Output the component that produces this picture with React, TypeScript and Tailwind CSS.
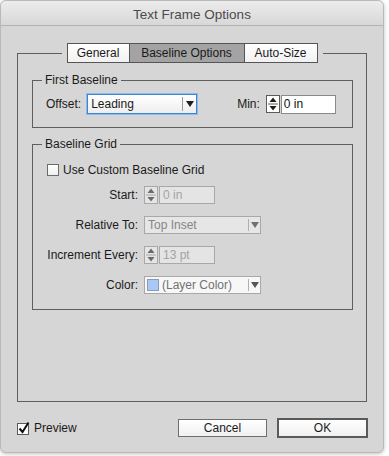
import React from 'react';

function Spinner({ disabled }: { disabled?: boolean }) {
  const stroke = disabled ? '#a8a8a8' : '#5a5a5a';
  const fill = disabled ? '#e4e4e4' : '#ffffff';
  const arrow = disabled ? '#6a6a6a' : '#1e1e1e';
  return (
    <svg width="14" height="18" viewBox="0 0 14 18" className="shrink-0 block">
      <rect x="0.5" y="0.5" width="13" height="17" fill={fill} stroke={stroke} />
      <line x1="2" y1="9" x2="12" y2="9" stroke={stroke} />
      <path d="M7 2.5 L10.5 7 L3.5 7 Z" fill={arrow} />
      <path d="M7 15.5 L10.5 11 L3.5 11 Z" fill={arrow} />
    </svg>
  );
}

function Arrow({ color = '#1e1e1e' }: { color?: string }) {
  return (
    <svg width="8" height="6" viewBox="0 0 8 6" className="block">
      <path d="M0 0 L8 0 L4 6 Z" fill={color} />
    </svg>
  );
}

function Field({ value, disabled }: { value: string; disabled?: boolean }) {
  return (
    <div
      className={
        disabled
          ? 'h-[18px] w-[56px] border border-[#a8a8a8] bg-[#e4e4e4] pl-[3px] text-[12px] leading-[16px] text-[#a3a3a3]'
          : 'h-[19px] w-[55px] border border-[#8a8a8a] bg-white pl-[2px] text-[12px] leading-[17px] text-[#111]'
      }
    >
      {value}
    </div>
  );
}

function Label({ children }: { children: React.ReactNode }) {
  return <div className="w-[91px] shrink-0 text-right text-[12px] leading-[14px] text-[#1a1a1a]">{children}</div>;
}

export default function App() {
  return (
    <div className="w-[389px] h-[456px] bg-white font-['Liberation_Sans',Arial,sans-serif] text-[#1a1a1a]">
      <div className="w-[384px] rounded-[6px] border border-[#b9b9b9] bg-[#d6d6d6] shadow-[0_1px_4px_rgba(0,0,0,0.25)] overflow-hidden">
        {/* title bar */}
        <div className="h-[25px] border-b border-[#b3b3b3] bg-gradient-to-b from-[#ececec] to-[#d8d8d8] pt-[6px] text-center text-[13.5px] leading-[16px] text-[#4b4b4b]">
          Text Frame Options
        </div>

        <fieldset className="mt-[17px] ml-[16px] w-[350px] border border-[#5f5f5f] pb-[91px]">
          <legend className="mx-auto px-[5px]">
            <div className="flex h-[20px] border border-[#555] text-[12px] leading-[18px]">
              <div className="w-[61px] bg-gradient-to-b from-white to-[#f1f1f1] text-center">General</div>
              <div className="w-[115px] border-l border-[#555] bg-[#a3a3a3] text-center">Baseline Options</div>
              <div className="w-[73px] border-l border-[#555] bg-gradient-to-b from-white to-[#f1f1f1] text-center">Auto-Size</div>
            </div>
          </legend>

          {/* First Baseline */}
          <fieldset className="mt-[10px] ml-[14px] w-[321px] border border-[#5f5f5f] pb-[13px]">
            <legend className="ml-[9px] px-[3px] text-[12px] leading-[14px]">First Baseline</legend>
            <div className="mt-[7px] flex items-center pl-[13px] text-[12px]">
              <span className="leading-[14px]">Offset:</span>
              <div className="ml-[6px] flex h-[20px] w-[110px] items-center border border-[#3c84d4] bg-gradient-to-b from-white to-[#eeeeee] shadow-[0_0_0_1px_#8ebbec]">
                <span className="flex-1 pl-[3px] leading-[14px]">Leading</span>
                <div className="h-[14px] border-l border-[#9a9a9a]" />
                <div className="flex w-[13px] justify-center">
                  <Arrow />
                </div>
              </div>
              <span className="ml-[40px] leading-[14px]">Min:</span>
              <div className="ml-[6px]">
                <Spinner />
              </div>
              <div className="ml-px">
                <Field value="0 in" />
              </div>
            </div>
          </fieldset>

          {/* Baseline Grid */}
          <fieldset className="mt-[9px] ml-[14px] w-[321px] border border-[#5f5f5f] pb-[15px]">
            <legend className="ml-[9px] px-[3px] text-[12px] leading-[14px]">Baseline Grid</legend>
            <div className="mt-[12px] flex items-center pl-[14px] text-[12px] leading-[14px]">
              <div className="h-[12px] w-[12px] border border-[#6b6b6b] bg-gradient-to-b from-white to-[#efefef]" />
              <span className="ml-[4px]">Use Custom Baseline Grid</span>
            </div>
            <div className="mt-[9px] flex flex-col gap-[12px] pl-[14px]">
              <div className="flex h-[18px] items-center">
                <Label>Start:</Label>
                <div className="ml-[6px]">
                  <Spinner disabled />
                </div>
                <div className="ml-px">
                  <Field value="0 in" disabled />
                </div>
              </div>
              <div className="flex h-[18px] items-center">
                <Label>Relative To:</Label>
                <div className="ml-[6px] flex h-[18px] w-[117px] items-center border border-[#a8a8a8] bg-[#e6e6e6] text-[12px]">
                  <span className="flex-1 pl-[3px] leading-[14px] text-[#858585]">Top Inset</span>
                  <div className="h-[12px] border-l border-[#b0b0b0]" />
                  <div className="flex w-[11px] justify-center">
                    <Arrow color="#707070" />
                  </div>
                </div>
              </div>
              <div className="flex h-[18px] items-center">
                <Label>Increment Every:</Label>
                <div className="ml-[6px]">
                  <Spinner disabled />
                </div>
                <div className="ml-px">
                  <Field value="13 pt" disabled />
                </div>
              </div>
              <div className="flex h-[18px] items-center">
                <Label>Color:</Label>
                <div className="ml-[6px] flex h-[18px] w-[117px] items-center border border-[#a8a8a8] bg-[#f7f7f7] text-[12px]">
                  <div className="ml-[2px] h-[12px] w-[12px] border border-[#8a9bb5] bg-[#a8c9f7]" />
                  <span className="flex-1 pl-[3px] leading-[14px] text-[#727272]">(Layer Color)</span>
                  <div className="h-[12px] border-l border-[#b0b0b0]" />
                  <div className="flex w-[11px] justify-center">
                    <Arrow color="#555" />
                  </div>
                </div>
              </div>
            </div>
          </fieldset>
        </fieldset>

        {/* footer */}
        <div className="mt-[16px] mb-[14px] flex items-center pl-[16px] pr-[15px] text-[12px]">
          <svg width="14" height="14" viewBox="0 0 14 14" className="block">
            <rect x="0.5" y="2.5" width="11" height="11" fill="#fff" stroke="#5a5a5a" />
            <path d="M2.5 7.5 L5.5 11 L11.5 1.5" fill="none" stroke="#111" strokeWidth="2" />
          </svg>
          <span className="ml-[3px] leading-[14px]">Preview</span>
          <div className="ml-auto flex h-[18px] w-[89px] items-center justify-center border border-[#6e6e6e] bg-gradient-to-b from-white to-[#f0f0f0] leading-[14px]">
            Cancel
          </div>
          <div className="ml-[10px] flex h-[20px] w-[91px] items-center justify-center border-2 border-[#5a5a5a] bg-gradient-to-b from-white to-[#f0f0f0] leading-[14px]">
            OK
          </div>
        </div>
      </div>
    </div>
  );
}
